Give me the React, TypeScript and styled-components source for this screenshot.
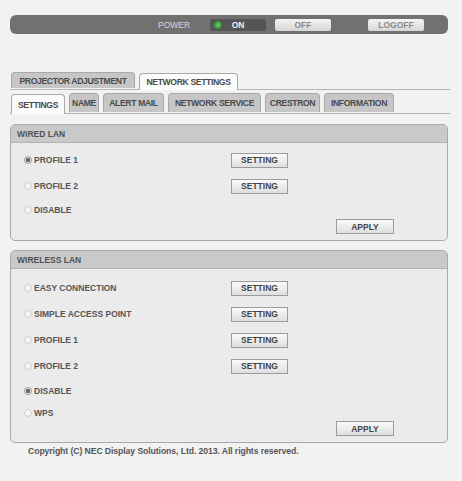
import React from 'react';
import styled, { createGlobalStyle } from 'styled-components';

const GlobalStyle = createGlobalStyle`
  body {
    margin: 0;
    background: #f2f2f2;
    font-family: 'Liberation Sans', Arial, sans-serif;
  }
`;

const Page = styled.div`
  width: 462px;
  height: 481px;
  box-sizing: border-box;
  padding: 15px 14px 0 10px;
  color: #4a4a4a;
`;

const TopBar = styled.div`
  display: flex;
  align-items: center;
  height: 19px;
  background: #717171;
  border-radius: 6px;
  padding-left: 148px;
`;

const PowerLabel = styled.span`
  font-size: 8.5px;
  color: #d8d8d8;
  width: 52px;
`;

const BarButton = styled.div<{ dark?: boolean; gap?: number }>`
  display: flex;
  align-items: center;
  justify-content: center;
  width: 56px;
  height: 12px;
  margin-left: ${(p) => p.gap ?? 0}px;
  border-radius: 2px;
  font-size: 8.5px;
  font-weight: bold;
  color: ${(p) => (p.dark ? '#f0f0f0' : '#8a8a8a')};
  background: ${(p) => (p.dark ? '#555' : 'linear-gradient(#f4f4f4, #d6d6d6)')};
  position: relative;
`;

const Lamp = styled.span`
  position: absolute;
  left: 4px;
  top: 2px;
  width: 8px;
  height: 8px;
  border-radius: 50%;
  background: radial-gradient(circle, #7ad07a 0%, #2f9a3a 60%, #247a2c 100%);
`;

const TabRow = styled.div<{ top: number }>`
  display: flex;
  align-items: flex-end;
  gap: 4px;
  margin-top: ${(p) => p.top}px;
  padding-left: 1px;
  border-bottom: 1px solid #b5b5b5;
  margin-right: -2px;
`;

const Tab = styled.div<{ active?: boolean; w: number; h: number }>`
  width: ${(p) => p.w}px;
  height: ${(p) => (p.active ? p.h + 1 : p.h)}px;
  box-sizing: border-box;
  display: flex;
  align-items: center;
  justify-content: center;
  font-size: 8.6px;
  font-weight: bold;
  letter-spacing: -0.35px;
  white-space: nowrap;
  color: #4a4a4a;
  background: ${(p) => (p.active ? '#fbfbfb' : '#c6c6c6')};
  border: 1px solid #a9a9a9;
  border-bottom: none;
  border-radius: 4px 4px 0 0;
  margin-bottom: ${(p) => (p.active ? -1 : 1)}px;
`;

const Box = styled.div<{ top: number }>`
  margin-top: ${(p) => p.top}px;
  border: 1px solid #a9a9a9;
  border-radius: 5px;
  background: #ebebeb;
  overflow: hidden;
`;

const BoxHeader = styled.div`
  height: 17px;
  display: flex;
  align-items: center;
  padding-left: 6px;
  background: #c9c9c9;
  border-bottom: 1px solid #b3b3b3;
  font-size: 8.5px;
  font-weight: bold;
  color: #505050;
`;

const BoxBody = styled.div<{ pt: number; pb: number }>`
  padding: ${(p) => p.pt}px 53px ${(p) => p.pb}px 13px;
`;

const Row = styled.div<{ h: number }>`
  display: grid;
  grid-template-columns: 207px 57px;
  align-items: center;
  height: ${(p) => p.h}px;
`;

const Label = styled.label`
  display: flex;
  align-items: center;
  gap: 2px;
  font-size: 8.5px;
  font-weight: bold;
  color: #555;
`;

const Radio = styled.span<{ on?: boolean }>`
  width: 6px;
  height: 6px;
  border-radius: 50%;
  border: 1px solid ${(p) => (p.on ? '#9a9a9a' : '#cfcfcf')};
  background: ${(p) =>
    p.on ? 'radial-gradient(circle, #6a6a6a 0 2px, #e8e8e8 2.5px)' : '#f4f4f4'};
`;

const Button = styled.div`
  height: 15px;
  box-sizing: border-box;
  display: flex;
  align-items: center;
  justify-content: center;
  border: 1px solid #9c9c9c;
  background: linear-gradient(#fafafa, #dedede);
  font-size: 8.5px;
  font-weight: bold;
  color: #444;
`;

const ApplyRow = styled.div<{ mt: number }>`
  display: flex;
  justify-content: flex-end;
  margin-top: ${(p) => p.mt}px;
  ${Button} {
    width: 58px;
  }
`;

const Copyright = styled.div`
  margin-top: 3px;
  padding-left: 18px;
  font-size: 8.7px;
  font-weight: bold;
  letter-spacing: -0.1px;
  color: #555;
`;

type Item = { label: string; on?: boolean; setting?: boolean; h: number };

const wired: Item[] = [
  { label: 'PROFILE 1', on: true, setting: true, h: 26 },
  { label: 'PROFILE 2', setting: true, h: 26 },
  { label: 'DISABLE', h: 22 },
];

const wireless: Item[] = [
  { label: 'EASY CONNECTION', setting: true, h: 26 },
  { label: 'SIMPLE ACCESS POINT', setting: true, h: 26 },
  { label: 'PROFILE 1', setting: true, h: 26 },
  { label: 'PROFILE 2', setting: true, h: 26 },
  { label: 'DISABLE', on: true, h: 24 },
  { label: 'WPS', h: 20 },
];

function Section({ title, items, top, pt }: { title: string; items: Item[]; top: number; pt: number }) {
  return (
    <Box top={top}>
      <BoxHeader>{title}</BoxHeader>
      <BoxBody pt={pt} pb={6}>
        {items.map((it) => (
          <Row key={it.label} h={it.h}>
            <Label>
              <Radio on={it.on} />
              {it.label}
            </Label>
            {it.setting && <Button>SETTING</Button>}
          </Row>
        ))}
        <ApplyRow mt={-2}>
          <Button>APPLY</Button>
        </ApplyRow>
      </BoxBody>
    </Box>
  );
}

export default function App() {
  return (
    <Page>
      <GlobalStyle />
      <TopBar>
        <PowerLabel>POWER</PowerLabel>
        <BarButton dark>
          <Lamp />
          ON
        </BarButton>
        <BarButton gap={9}>OFF</BarButton>
        <BarButton gap={37}>LOGOFF</BarButton>
      </TopBar>

      <TabRow top={38}>
        <Tab w={124} h={16}>PROJECTOR ADJUSTMENT</Tab>
        <Tab w={99} h={16} active>NETWORK SETTINGS</Tab>
      </TabRow>
      <TabRow top={3}>
        <Tab w={54} h={19} active>SETTINGS</Tab>
        <Tab w={30} h={19}>NAME</Tab>
        <Tab w={61} h={19}>ALERT MAIL</Tab>
        <Tab w={93} h={19}>NETWORK SERVICE</Tab>
        <Tab w={55} h={19}>CRESTRON</Tab>
        <Tab w={70} h={19}>INFORMATION</Tab>
      </TabRow>

      <Section title="WIRED LAN" items={wired} top={10} pt={4} />
      <Section title="WIRELESS LAN" items={wireless} top={9} pt={6} />

      <Copyright>Copyright (C) NEC Display Solutions, Ltd. 2013. All rights reserved.</Copyright>
    </Page>
  );
}
